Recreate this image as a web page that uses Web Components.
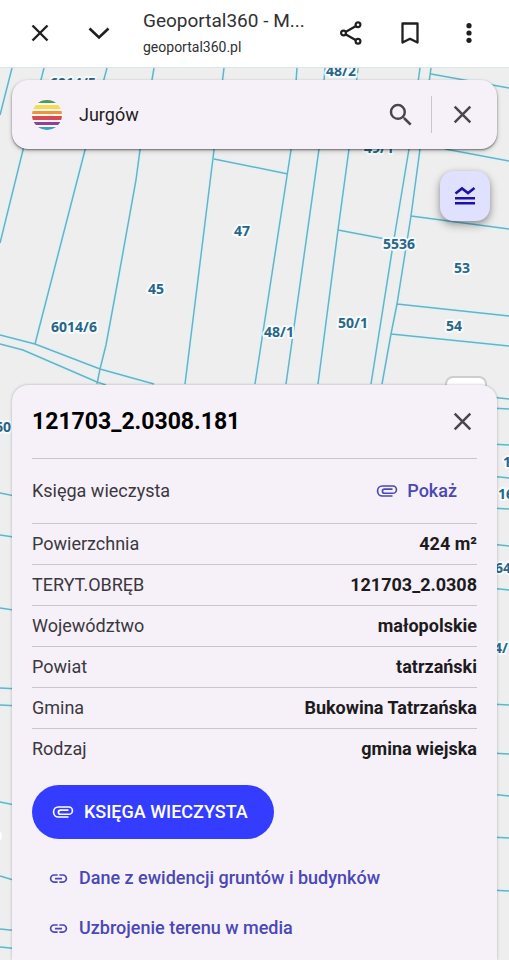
<!DOCTYPE html>
<html lang="pl">
<head>
<meta charset="utf-8">
<meta name="viewport" content="width=device-width, initial-scale=1">
<title>Geoportal360</title>
<style>
  html, body { height: 100%; }
  body { margin: 0; overflow: hidden; background: #eeeeee; font-family: Roboto, "Liberation Sans", sans-serif; color: #1d1b20; }
</style>
</head>
<body>
<geo-app></geo-app>
<script>
const RESET = `
  *, *::before, *::after { box-sizing: border-box; }
  button { font: inherit; color: inherit; background: none; border: 0; padding: 0; cursor: pointer; display: flex; align-items: center; justify-content: center; }
  svg { display: block; }
`;
const define = (name, html) => {
  const template = document.createElement('template');
  template.innerHTML = html;
  customElements.define(name, class extends HTMLElement {
    constructor() {
      super();
      this.attachShadow({ mode: 'open' }).append(template.content.cloneNode(true));
    }
  });
};

const ICONS = {
  close: '<path d="M4.500 4.500l15 15M19.500 4.500l-15 15" fill="none" stroke="currentColor" stroke-width="2.400"/>',
  chevron: '<path d="M2.500 7.500L12 16.500l9.500-9" fill="none" stroke="currentColor" stroke-width="2.600"/>',
  share: '<g fill="none" stroke="currentColor" stroke-width="2.200"><path d="M6.500 11l10.500-6M6.500 13.200l10.500 6"/><circle cx="4.500" cy="12" r="2.400"/><circle cx="19" cy="3.700" r="2.400"/><circle cx="19" cy="20.300" r="2.400"/></g>',
  bookmark: '<path d="M4.500 2.500h15v19L12 17.800l-7.500 3.700z" fill="none" stroke="currentColor" stroke-width="2.300" stroke-linejoin="round"/>',
  more: '<g fill="currentColor"><circle cx="12" cy="4.700" r="2.600"/><circle cx="12" cy="12" r="2.600"/><circle cx="12" cy="19.300" r="2.600"/></g>',
  search: '<path d="M15.500 14h-.79l-.28-.27A6.471 6.471 0 0 0 16 9.500 6.500 6.500 0 1 0 9.500 16c1.610 0 3.090-.59 4.230-1.570l.27.28v.79l5 4.990L20.490 19l-4.990-5zm-6 0C7.010 14 5 11.990 5 9.500S7.010 5 9.500 5 14 7.010 14 9.500 11.990 14 9.500 14z" fill="currentColor"/>',
  layers: '<path d="M2.500 9.500L9 4.500l6 4.500 6.500-5M2 14.200h20M2 19.200h20" fill="none" stroke="currentColor" stroke-width="2.600"/>',
  clip: '<path d="M18 17.500H7C4 17.500 1.700 15.100 1.700 12S4 6.500 7 6.500h11.300c2.200 0 4 1.800 4 4s-1.800 4-4 4H9.500c-1.500 0-2.500-1-2.500-2.300s1-2.200 2.500-2.200H18" fill="none" stroke="currentColor" stroke-width="1.800"/>',
  link: '<path d="M3.900 12c0-1.710 1.390-3.100 3.100-3.100h4V7H7c-2.760 0-5 2.240-5 5s2.240 5 5 5h4v-1.900H7c-1.710 0-3.100-1.390-3.100-3.100zM8 13h8v-2H8v2zm9-6h-4v1.900h4c1.710 0 3.100 1.390 3.100 3.100s-1.390 3.100-3.100 3.100h-4V17h4c2.760 0 5-2.240 5-5s-2.240-5-5-5z" fill="currentColor"/>'
};
customElements.define('geo-icon', class extends HTMLElement {
  constructor() {
    super();
    this.attachShadow({ mode: 'open' });
  }
  connectedCallback() {
    this.shadowRoot.innerHTML = `<style>:host{display:block;width:24px;height:24px;flex:none}svg{display:block;width:100%;height:100%}</style>
      <svg viewBox="0 0 24 24" aria-hidden="true">${ICONS[this.getAttribute('name')]}</svg>`;
  }
});

define('browser-bar', `
<style>${RESET}
  :host { display: flex; align-items: center; box-sizing: border-box; height: 68px; padding: 0 24px 2px; background: #fff; color: #1f1f1f; border-bottom: 1px solid #d8e6ea; flex: none; }
  button { width: 32px; height: 32px; flex: none; }
  .down { margin-left: 27px; }
  .page { flex: 1; min-width: 0; margin-left: 28px; color: #303134; }
  .title { font-size: 19px; line-height: 28px; white-space: nowrap; }
  .host { font-size: 14px; line-height: 24px; }
  .actions { display: flex; gap: 27px; }
</style>
<button aria-label="Zamknij"><geo-icon name="close"></geo-icon></button>
<button class="down" aria-label="Minimalizuj"><geo-icon name="chevron"></geo-icon></button>
<div class="page"><div class="title">Geoportal360 - M...</div><div class="host">geoportal360.pl</div></div>
<div class="actions">
  <button aria-label="Udostępnij"><geo-icon name="share"></geo-icon></button>
  <button aria-label="Zakładka"><geo-icon name="bookmark"></geo-icon></button>
  <button aria-label="Więcej"><geo-icon name="more"></geo-icon></button>
</div>`);

define('parcel-map', `
<style>
  :host { display: block; overflow: hidden; background: #eeeeee; }
  svg { display: block; width: 100%; height: 100%; }
  path { fill: none; }
  .halo { stroke: #dff2f6; stroke-width: 5; }
  .line { stroke: #6fb0c0; stroke-width: 1.500; }
  text { font: bold 14px "Noto Sans", "Open Sans", sans-serif; fill: #2b6585; stroke: #f5fcff; stroke-width: 4; stroke-linejoin: round; paint-order: stroke; text-anchor: middle; }
</style>
<svg viewBox="0 68 509 892" preserveAspectRatio="xMinYMin slice" role="img" aria-label="Mapa działek">
  <defs><g id="plots">
    <path d="M12 68L0 115M44 68L23 150L0 243M107 68L85 150L35 344M154 68L140 150L136 180L118 280L106 345L100 369L97 384M224 68L214 150L201 255L185 384M214 159L288 174M297 68L291 150L255 384M325 68L319 149L295 320L286 384M358 68L349 149L338 230L318 384M338 230L396 241"/>
    <path d="M420 68L409 149L393 245L371 384M431 68L420 149L411 216L397 304L391 334L382 384M431 74L509 88M445 149L509 161M411 216L509 229M397 304L509 316M391 334L509 346"/>
    <path d="M0 335L35 344L100 369L154 384M0 344L23 350L97 382L106 385"/>
    <path d="M490 397L509 399M490 408L509 409M490 444L509 445M490 476L509 478M490 508L509 509M490 544L509 546M490 588L509 590M490 704L509 705M490 753L509 754M490 794L509 796M490 837L509 838M490 890L509 891"/>
    <path d="M0 493L20 497M0 535L20 538M0 608L20 611M0 688L20 689M0 705L20 706M0 802L20 806M0 876L20 882M0 929L20 931M0 947L20 949"/>
  </g></defs>
  <use class="halo" href="#plots"/>
  <use class="line" href="#plots"/>
  <text x="73" y="88">6014/5</text><text x="341" y="76">48/2</text><text x="379" y="153">49/1</text>
  <text x="242" y="236">47</text><text x="156" y="294">45</text><text x="74" y="332">6014/6</text>
  <text x="279" y="337">48/1</text><text x="353" y="328">50/1</text><text x="399" y="249">5536</text>
  <text x="462" y="273">53</text><text x="454" y="331">54</text>
  <text x="3" y="432">60</text><text x="507" y="467">1</text><text x="506" y="499">16</text>
  <text x="503" y="573">64</text><text x="501" y="653">4/</text>
  <circle cx="-4" cy="836" r="6" fill="#fff"/>
</svg>`);

define('search-bar', `
<style>${RESET}
  :host { display: flex; align-items: center; box-sizing: border-box; height: 69px; padding: 0 12px 0 20px; border-radius: 16px; background: #f6f1f8; box-shadow: 0 1px 2px #0007, 0 2px 5px #0003; }
  .logo { width: 30px; height: 30px; flex: none; }
  input { flex: 1; min-width: 0; margin-left: 17px; padding: 0; border: 0; outline: 0; background: none; font: 18px/24px Roboto, sans-serif; color: #1d1b20; }
  button { width: 46px; height: 46px; color: #49454f; }
  .find geo-icon { width: 30px; height: 30px; }
  .find { margin-right: 7px; }
  .clear { margin-left: 7px; }
  .clear geo-icon { width: 25px; height: 25px; }
  .rule { width: 1px; height: 37px; background: #cac4d0; }
</style>
<svg class="logo" viewBox="0 0 30 30" aria-hidden="true">
  <defs><clipPath id="disc"><circle cx="15" cy="15" r="15"/></clipPath></defs>
  <g clip-path="url(#disc)"><path fill="#fbf6f2" d="M0 0h30v30H0z"/>
    <path fill="#4b9a62" d="M0 0h30v3H0z"/><path fill="#f3dc58" d="M0 5h30v4H0z"/><path fill="#e9953a" d="M0 11h30v3H0z"/>
    <path fill="#d84a4e" d="M0 16h30v4H0z"/><path fill="#8e3f9f" d="M0 22h30v3H0z"/><path fill="#3b9fc4" d="M0 27h30v3H0z"/></g>
</svg>
<input type="text" aria-label="Szukaj" value="Jurgów">
<button class="find" aria-label="Szukaj"><geo-icon name="search"></geo-icon></button>
<span class="rule"></span>
<button class="clear" aria-label="Wyczyść"><geo-icon name="close"></geo-icon></button>`);

define('layers-button', `
<style>${RESET}
  :host { display: block; }
  button { width: 50px; height: 50px; border-radius: 14px; background: #e0e0ff; color: #1d12a8; box-shadow: 0 4px 10px #0005, 0 1px 5px #0002; }
</style>
<button aria-label="Warstwy"><geo-icon name="layers"></geo-icon></button>`);

define('data-row', `
<style>
  :host { display: flex; justify-content: space-between; align-items: center; padding: 8px 0; border-bottom: 1px solid #cac5cd; font-size: 18px; line-height: 24px; color: #3b383e; }
  :host(:last-of-type) { border-bottom: 0; }
  ::slotted(b) { font-weight: 700; color: #1d1b20; }
</style>
<slot name="label"></slot><slot></slot>`);

define('resource-link', `
<style>
  :host { display: block; }
  a { display: flex; align-items: center; gap: 10px; padding: 13px 16px; font-size: 18px; line-height: 24px; font-weight: 500; color: #4a48b5; text-decoration: none; }
  geo-icon { width: 21px; height: 21px; }
</style>
<a href="#"><geo-icon name="link"></geo-icon><slot></slot></a>`);

define('parcel-panel', `
<style>${RESET}
  :host { display: block; padding: 0 20px; border-radius: 16px 16px 0 0; background: #f6f1f8; box-shadow: 0 0 3px #0004; }
  header { display: flex; align-items: center; justify-content: space-between; height: 74px; border-bottom: 1px solid #cac5cd; }
  h1 { margin: 0; font-size: 23px; line-height: 32px; font-weight: 700; color: #000; }
  .close { width: 30px; height: 46px; color: #49454f; }
  .close geo-icon { width: 25px; height: 25px; }
  .register { padding: 20px 0; }
  .show { gap: 9px; padding: 0 20px 0 0; font-size: 18px; font-weight: 500; line-height: 24px; color: #4a48b5; }
  .main { gap: 10px; margin: 16px 0 14px; padding: 15px 26px 15px 20px; border-radius: 28px; background: #343dff; color: #fff; font-size: 18px; line-height: 24px; font-weight: 500; }
  .show geo-icon, .main geo-icon { width: 22px; height: 22px; }
</style>
<header><h1>121703_2.0308.181</h1><button class="close" aria-label="Zamknij"><geo-icon name="close"></geo-icon></button></header>
<section>
  <data-row class="register"><span slot="label">Księga wieczysta</span><button class="show"><geo-icon name="clip"></geo-icon>Pokaż</button></data-row>
  <data-row><span slot="label">Powierzchnia</span><b>424 m²</b></data-row>
  <data-row><span slot="label">TERYT.OBRĘB</span><b>121703_2.0308</b></data-row>
  <data-row><span slot="label">Województwo</span><b>małopolskie</b></data-row>
  <data-row><span slot="label">Powiat</span><b>tatrzański</b></data-row>
  <data-row><span slot="label">Gmina</span><b>Bukowina Tatrzańska</b></data-row>
  <data-row><span slot="label">Rodzaj</span><b>gmina wiejska</b></data-row>
</section>
<button class="main"><geo-icon name="clip"></geo-icon>KSIĘGA WIECZYSTA</button>
<resource-link>Dane z ewidencji gruntów i budynków</resource-link>
<resource-link>Uzbrojenie terenu w media</resource-link>`);

define('geo-app', `
<style>${RESET}
  :host { display: flex; flex-direction: column; height: 100vh; overflow: hidden; }
  main { position: relative; flex: 1; min-height: 0; overflow: hidden; }
  parcel-map { position: absolute; inset: 0; }
  .locate { position: absolute; top: 310px; right: 24px; width: 38px; height: 40px; border-radius: 6px; background: #fff; box-shadow: 0 0 0 2px #0002; }
  .overlay { position: relative; display: flex; flex-direction: column; min-height: 100%; padding: 12px 12px 0; }
  layers-button { align-self: flex-end; margin: 22px 7px 164px 0; }
  parcel-panel { flex: 1; }
</style>
<browser-bar></browser-bar>
<main>
  <parcel-map></parcel-map>
  <button class="locate" aria-label="Moja lokalizacja"></button>
  <div class="overlay">
    <search-bar></search-bar>
    <layers-button></layers-button>
    <parcel-panel></parcel-panel>
  </div>
</main>`);
</script>
</body>
</html>
